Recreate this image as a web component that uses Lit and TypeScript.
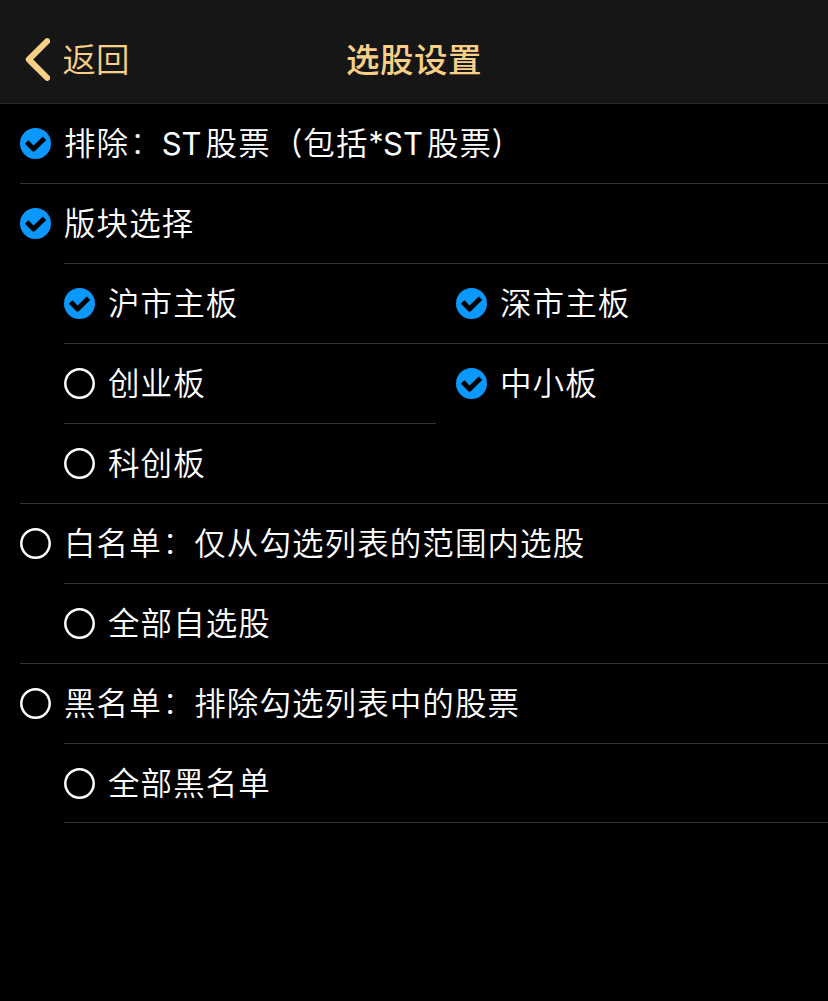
import { LitElement, html, css, svg } from "lit";
import { customElement, property } from "lit/decorators.js";

@customElement("check-item")
class CheckItem extends LitElement {
  @property({ type: Boolean }) checked = false;

  static styles = css`
    :host { display: flex; align-items: center; height: 79px; }
    .mark { display: block; flex: none; width: 31px; height: 31px; margin-right: 13px; }
    .label {
      font-size: 31.5px; line-height: 46px; letter-spacing: 1.08px; white-space: nowrap; color: #fff;
      padding-bottom: 6px;
    }
  `;

  render() {
    return html`
      <svg class="mark" viewBox="0 0 31 31">
        ${this.checked
          ? svg`<circle cx="15.5" cy="15.5" r="15.5" fill="#0a98ff"/>
              <path d="M8.4 15.8L13.6 21L22.8 11.9" fill="none" stroke="#000" stroke-width="4.9" stroke-linecap="square" stroke-linejoin="round"/>`
          : svg`<circle cx="15.5" cy="15.5" r="14.2" fill="none" stroke="#fff" stroke-width="2.5"/>`}
      </svg>
      <span class="label"><slot></slot></span>
    `;
  }
}

@customElement("app-root")
class AppRoot extends LitElement {
  static styles = css`
    :host {
      display: block; min-height: 1001px; background: #000; overflow: hidden;
      font-family: "Noto Sans CJK SC", sans-serif; font-weight: 350;
    }
    .header {
      display: grid; grid-template-columns: 1fr auto 1fr; align-items: center; box-sizing: border-box;
      height: 104px; padding: 16px 25px 0; background: #161616; border-bottom: 1px solid #2b2b2b; color: #f8cf87;
    }
    .back { display: flex; align-items: center; font-size: 33.5px; line-height: 48px; }
    .back span { padding-bottom: 3px; }
    .back svg { width: 25px; height: 43px; margin-right: 12.5px; }
    .title { font-size: 33.5px; line-height: 48px; font-weight: 500; letter-spacing: 0.5px; padding-bottom: 3px; }
    .line { border-bottom: 1px solid #333; }
    .l1 { margin-left: 20px; }
    .l2 { margin-left: 64px; }
    .pair { display: grid; grid-template-columns: 392px 1fr; }
    .gap { display: grid; grid-template-columns: 372px 1fr; column-gap: 20px; }
    .first { border-bottom: 1px solid #333; }
    .indent { padding-left: 44px; }
    .last { height: 79px; box-sizing: border-box; }
    .latin { font-family: Inter, sans-serif; font-weight: 400; font-size: 31px; line-height: 1; letter-spacing: 0; margin-right: 4px; }
    .star { display: inline-block; width: 14.5px; font-family: Inter, sans-serif; font-weight: 400; font-size: 30px; line-height: 1; letter-spacing: 0; transform: translateY(-2px); }
    .colon { display: inline-block; width: 32.5px; line-height: 1; text-indent: 0.5px; font-weight: 300; transform: translateY(-1px); }
    .open, .close { display: inline-block; line-height: 1; font-weight: 500; }
    .open { transform: scaleX(0.8); transform-origin: 90% 50%; }
    .close { transform: scaleX(0.8); transform-origin: 0 50%; }
  `;

  render() {
    return html`
      <div class="header">
        <div class="back">
          <svg viewBox="0 0 25 43"><path d="M22.2 3.2L3.8 21.5L22.2 39.8" fill="none" stroke="#f8cf87" stroke-width="6" stroke-linecap="round" stroke-linejoin="round"/></svg>
          <span>返回</span>
        </div>
        <div class="title">选股设置</div>
      </div>
      <div class="line l1"><check-item checked>排除<span class="colon">：</span><span class="latin">ST</span>股票<span class="open">（</span>包括<span class="star">*</span><span class="latin">ST</span>股票<span class="close">）</span></check-item></div>
      <div class="l1"><check-item checked>版块选择</check-item></div>
      <div class="line l2"></div>
      <div class="line l2 pair"><check-item checked>沪市主板</check-item><check-item checked>深市主板</check-item></div>
      <div class="l2 gap"><check-item class="first">创业板</check-item><check-item checked>中小板</check-item></div>
      <div class="line l1 indent"><check-item>科创板</check-item></div>
      <div class="l1"><check-item>白名单<span class="colon">：</span>仅从勾选列表的范围内选股</check-item></div>
      <div class="line l2"></div>
      <div class="line l1 indent"><check-item>全部自选股</check-item></div>
      <div class="l1"><check-item>黑名单<span class="colon">：</span>排除勾选列表中的股票</check-item></div>
      <div class="line l2"></div>
      <div class="line l2 last"><check-item>全部黑名单</check-item></div>
    `;
  }
}
